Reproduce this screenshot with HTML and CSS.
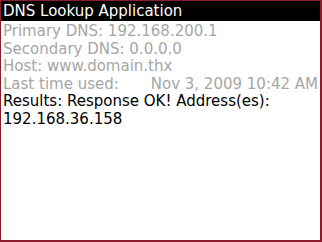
FILE: index.html
```html
<!DOCTYPE html>
<html lang="en">
<head>
  <meta charset="UTF-8" />
  <title>DNS Lookup Application</title>
  <link rel="stylesheet" href="styles.css">
</head>
<body>
  <div class="pantalla">
    <div class="titulo">DNS Lookup Application</div>
    <div class="campos">
      <div class="campo gris">Primary DNS: 192.168.200.1</div>
      <div class="campo gris">Secondary DNS: 0.0.0.0</div>
      <div class="campo gris">Host: www.domain.thx</div>
      <div class="campo gris fecha">
        <span>Last time used:</span>
        <span>Nov 3, 2009 10:42 AM</span>
      </div>
      <div class="campo">Results: Response OK! Address(es):</div>
      <div class="campo">192.168.36.158</div>
    </div>
  </div>
</body>
</html>
```

FILE: styles.css
```css
* { box-sizing: border-box; }
body {
  margin: 0;
  font-family: 'DejaVu Sans', sans-serif;
  background: white;
}

.pantalla {
  width: 322px;
  height: 242px;
  border: 1px solid #8c1c2c;
  border-right-width: 2px;
  border-bottom-width: 2px;
  background: white;
}

.titulo {
  background: black;
  color: white;
  height: 20px;
  line-height: 20px;
  font-size: 15px;
  padding-left: 2px;
}

.campos {
  padding-top: 2px;
}

.campo {
  font-size: 15px;
  line-height: 17.6px;
  color: black;
  padding-left: 2px;
  white-space: nowrap;
}

.gris {
  color: #a6a6a6;
}

.fecha {
  display: flex;
  justify-content: space-between;
  padding-right: 2px;
}
```
